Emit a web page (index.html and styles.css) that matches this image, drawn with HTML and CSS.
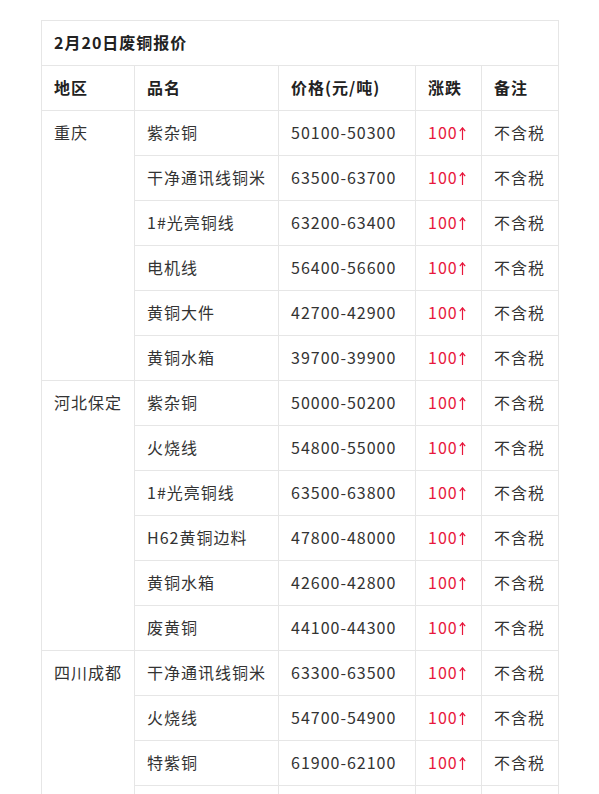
FILE: index.html
```html
<!DOCTYPE html>
<html lang="zh-CN">
<head>
<meta charset="utf-8">
<title>2月20日废铜报价</title>
<link rel="stylesheet" href="styles.css">
</head>
<body>
<div class="page">
<table class="price-table">
  <colgroup>
    <col class="c-region"><col class="c-name"><col class="c-price"><col class="c-change"><col class="c-note">
  </colgroup>
  <tr class="title-row"><th colspan="5"><div class="cell">2月20日废铜报价</div></th></tr>
  <tr class="head-row">
    <th><div class="cell">地区</div></th>
    <th><div class="cell">品名</div></th>
    <th><div class="cell">价格(元/吨)</div></th>
    <th><div class="cell">涨跌</div></th>
    <th><div class="cell">备注</div></th>
  </tr>
  <tr><td rowspan="6" class="region"><div class="cell">重庆</div></td><td><div class="cell">紫杂铜</div></td><td><div class="cell">50100-50300</div></td><td><div class="cell up">100<svg class="arrow" viewBox="0 0 7 13"><path d="M3.5 13V1M0.8 4.2L3.5 0.8L6.2 4.2"/></svg></div></td><td><div class="cell">不含税</div></td></tr>
  <tr><td><div class="cell">干净通讯线铜米</div></td><td><div class="cell">63500-63700</div></td><td><div class="cell up">100<svg class="arrow" viewBox="0 0 7 13"><path d="M3.5 13V1M0.8 4.2L3.5 0.8L6.2 4.2"/></svg></div></td><td><div class="cell">不含税</div></td></tr>
  <tr><td><div class="cell">1#光亮铜线</div></td><td><div class="cell">63200-63400</div></td><td><div class="cell up">100<svg class="arrow" viewBox="0 0 7 13"><path d="M3.5 13V1M0.8 4.2L3.5 0.8L6.2 4.2"/></svg></div></td><td><div class="cell">不含税</div></td></tr>
  <tr><td><div class="cell">电机线</div></td><td><div class="cell">56400-56600</div></td><td><div class="cell up">100<svg class="arrow" viewBox="0 0 7 13"><path d="M3.5 13V1M0.8 4.2L3.5 0.8L6.2 4.2"/></svg></div></td><td><div class="cell">不含税</div></td></tr>
  <tr><td><div class="cell">黄铜大件</div></td><td><div class="cell">42700-42900</div></td><td><div class="cell up">100<svg class="arrow" viewBox="0 0 7 13"><path d="M3.5 13V1M0.8 4.2L3.5 0.8L6.2 4.2"/></svg></div></td><td><div class="cell">不含税</div></td></tr>
  <tr><td><div class="cell">黄铜水箱</div></td><td><div class="cell">39700-39900</div></td><td><div class="cell up">100<svg class="arrow" viewBox="0 0 7 13"><path d="M3.5 13V1M0.8 4.2L3.5 0.8L6.2 4.2"/></svg></div></td><td><div class="cell">不含税</div></td></tr>
  <tr><td rowspan="6" class="region"><div class="cell">河北保定</div></td><td><div class="cell">紫杂铜</div></td><td><div class="cell">50000-50200</div></td><td><div class="cell up">100<svg class="arrow" viewBox="0 0 7 13"><path d="M3.5 13V1M0.8 4.2L3.5 0.8L6.2 4.2"/></svg></div></td><td><div class="cell">不含税</div></td></tr>
  <tr><td><div class="cell">火烧线</div></td><td><div class="cell">54800-55000</div></td><td><div class="cell up">100<svg class="arrow" viewBox="0 0 7 13"><path d="M3.5 13V1M0.8 4.2L3.5 0.8L6.2 4.2"/></svg></div></td><td><div class="cell">不含税</div></td></tr>
  <tr><td><div class="cell">1#光亮铜线</div></td><td><div class="cell">63500-63800</div></td><td><div class="cell up">100<svg class="arrow" viewBox="0 0 7 13"><path d="M3.5 13V1M0.8 4.2L3.5 0.8L6.2 4.2"/></svg></div></td><td><div class="cell">不含税</div></td></tr>
  <tr><td><div class="cell">H62黄铜边料</div></td><td><div class="cell">47800-48000</div></td><td><div class="cell up">100<svg class="arrow" viewBox="0 0 7 13"><path d="M3.5 13V1M0.8 4.2L3.5 0.8L6.2 4.2"/></svg></div></td><td><div class="cell">不含税</div></td></tr>
  <tr><td><div class="cell">黄铜水箱</div></td><td><div class="cell">42600-42800</div></td><td><div class="cell up">100<svg class="arrow" viewBox="0 0 7 13"><path d="M3.5 13V1M0.8 4.2L3.5 0.8L6.2 4.2"/></svg></div></td><td><div class="cell">不含税</div></td></tr>
  <tr><td><div class="cell">废黄铜</div></td><td><div class="cell">44100-44300</div></td><td><div class="cell up">100<svg class="arrow" viewBox="0 0 7 13"><path d="M3.5 13V1M0.8 4.2L3.5 0.8L6.2 4.2"/></svg></div></td><td><div class="cell">不含税</div></td></tr>
  <tr><td rowspan="4" class="region"><div class="cell">四川成都</div></td><td><div class="cell">干净通讯线铜米</div></td><td><div class="cell">63300-63500</div></td><td><div class="cell up">100<svg class="arrow" viewBox="0 0 7 13"><path d="M3.5 13V1M0.8 4.2L3.5 0.8L6.2 4.2"/></svg></div></td><td><div class="cell">不含税</div></td></tr>
  <tr><td><div class="cell">火烧线</div></td><td><div class="cell">54700-54900</div></td><td><div class="cell up">100<svg class="arrow" viewBox="0 0 7 13"><path d="M3.5 13V1M0.8 4.2L3.5 0.8L6.2 4.2"/></svg></div></td><td><div class="cell">不含税</div></td></tr>
  <tr><td><div class="cell">特紫铜</div></td><td><div class="cell">61900-62100</div></td><td><div class="cell up">100<svg class="arrow" viewBox="0 0 7 13"><path d="M3.5 13V1M0.8 4.2L3.5 0.8L6.2 4.2"/></svg></div></td><td><div class="cell">不含税</div></td></tr>
  <tr><td><div class="cell">紫杂铜</div></td><td><div class="cell">50200-50400</div></td><td><div class="cell up">100<svg class="arrow" viewBox="0 0 7 13"><path d="M3.5 13V1M0.8 4.2L3.5 0.8L6.2 4.2"/></svg></div></td><td><div class="cell">不含税</div></td></tr>
</table>
</div>
</body>
</html>
```
FILE: styles.css
```css
html, body {
  margin: 0;
  padding: 0;
  background: #ffffff;
}
.page {
  padding: 20px 0 0 41px;
}
.price-table {
  border-collapse: collapse;
  table-layout: fixed;
  width: 517px;
  font-family: "Noto Sans CJK SC", "Noto Sans", sans-serif;
  font-size: 16px;
  letter-spacing: 1px;
  color: #333333;
}
.c-region { width: 93px; }
.c-name { width: 144px; }
.c-price { width: 137px; }
.c-change { width: 66px; }
.c-note { width: 77px; }
.price-table th,
.price-table td {
  border: 1px solid #e6e6e6;
  padding: 0;
  vertical-align: top;
  text-align: left;
}
.price-table th {
  font-weight: bold;
  color: #222222;
}
.cell {
  height: 44px;
  line-height: 43px;
  padding: 0 12px;
  white-space: nowrap;
}
.up {
  color: #e8173c;
}
.arrow {
  width: 7px;
  height: 13px;
  margin-left: 1px;
  vertical-align: -1px;
  fill: none;
  stroke: currentColor;
  stroke-width: 1.2;
}
```
